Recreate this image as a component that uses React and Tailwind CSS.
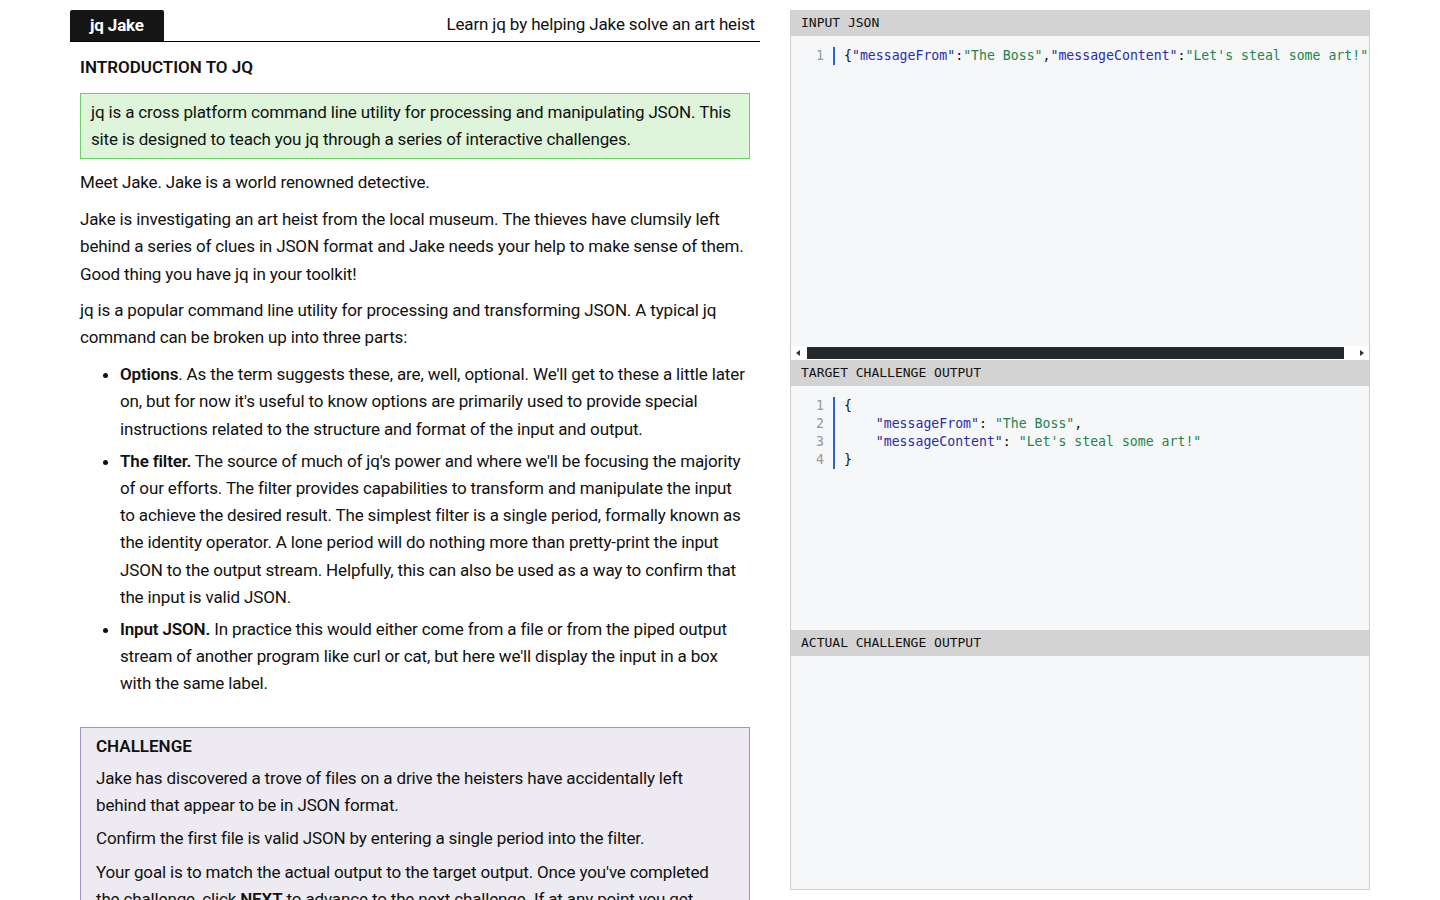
import React from "react";

const mono = { fontFamily: '"DejaVu Sans Mono", "Liberation Mono", monospace' };

function Line({ n, children }) {
  return (
    <div className="flex h-[18px] items-center">
      <div className="w-[42px] shrink-0 pr-[9px] text-right text-[#999999]">{n}</div>
      <div className="h-full w-[2px] shrink-0 bg-[#2563d6]" />
      <div className="shrink-0 whitespace-pre pl-[9px] text-[#111]">{children}</div>
    </div>
  );
}

const K = ({ children }) => <span className="text-[#2a2ca6]">{children}</span>;
const S = ({ children }) => <span className="text-[#23854a]">{children}</span>;

function PanelHeader({ children }) {
  return (
    <div className="flex h-[26px] shrink-0 items-center bg-[#d3d3d3] pl-[10px] text-[13px] text-[#111]" style={mono}>
      {children}
    </div>
  );
}

export default function App() {
  return (
    <div className="flex min-h-screen gap-[30px] bg-white pl-[70px] pt-[10px] tracking-[-0.15px] text-[#111]" style={{ fontFamily: 'Roboto, "Noto Sans", sans-serif' }}>
      <div className="w-[690px] shrink-0">
        <div className="flex items-end justify-between border-b border-black">
          <div className="flex h-[31px] items-center rounded-t-[2px] bg-[#151515] px-[20px] text-[17px] font-bold text-white">jq Jake</div>
          <div className="pb-[4px] pr-[5px] text-[17px]">Learn jq by helping Jake solve an art heist</div>
        </div>
        <div className="px-[10px] text-[17px] leading-[27.2px]">
          <h1 className="mt-[12px] text-[17px] font-semibold leading-[27px] tracking-normal">INTRODUCTION TO JQ</h1>
          <div className="mt-[12px] border border-[#6fd067] bg-[#def5db] px-[10px] py-[5px] leading-[27px]">
            jq is a cross platform command line utility for processing and manipulating JSON. This site is designed to teach you jq through a series of interactive challenges.
          </div>
          <p className="mt-[10px]">Meet Jake. Jake is a world renowned detective.</p>
          <p className="mt-[10px]">
            Jake is investigating an art heist from the local museum. The thieves have clumsily left behind a series of clues in JSON format and Jake needs your help to make sense of them. Good thing you have jq in your toolkit!
          </p>
          <p className="mt-[9px]">
            jq is a popular command line utility for processing and transforming JSON. A typical jq command can be broken up into three parts:
          </p>
          <ul className="mt-[10px] list-disc pl-[40px]">
            <li>
              <b className="font-semibold">Options</b>. As the term suggests these, are, well, optional. We'll get to these a little later on, but for now it's useful to know options are primarily used to provide special instructions related to the structure and format of the input and output.
            </li>
            <li className="mt-[5px]">
              <b className="font-semibold">The filter.</b> The source of much of jq's power and where we'll be focusing the majority of our efforts. The filter provides capabilities to transform and manipulate the input to achieve the desired result. The simplest filter is a single period, formally known as the identity operator. A lone period will do nothing more than pretty-print the input JSON to the output stream. Helpfully, this can also be used as a way to confirm that the input is valid JSON.
            </li>
            <li className="mt-[5px]">
              <b className="font-semibold">Input JSON.</b> In practice this would either come from a file or from the piped output stream of another program like curl or cat, but here we'll display the input in a box with the same label.
            </li>
          </ul>
          <div className="mt-[29px] border border-[#9d95c4] bg-[#edeaf1] px-[15px] pt-[5px] pb-[10px]">
            <h2 className="text-[17px] font-semibold leading-[27px] tracking-normal">CHALLENGE</h2>
            <p className="mt-[5px]">
              Jake has discovered a trove of files on a drive the heisters have accidentally left behind that appear to be in JSON format.
            </p>
            <p className="mt-[6px]">Confirm the first file is valid JSON by entering a single period into the filter.</p>
            <p className="mt-[7px]">
              Your goal is to match the actual output to the target output. Once you've completed the challenge, click <b className="font-semibold">NEXT</b> to advance to the next challenge. If at any point you get stuck, click <b className="font-semibold">HINT</b> for a nudge in the right direction.
            </p>
          </div>
        </div>
      </div>

      <div className="flex h-[880px] w-[580px] shrink-0 flex-col border-x border-b border-[#cfcfcf] bg-[#f6f7f9] tracking-normal">
        <PanelHeader>INPUT JSON</PanelHeader>
        <div className="h-[310px] shrink-0 overflow-hidden pt-[11px] text-[13.2px]" style={mono}>
          <Line n="1">
            {"{"}<K>"messageFrom"</K>:<S>"The Boss"</S>,<K>"messageContent"</K>:<S>"Let's steal some art!"</S>{"}"}
          </Line>
        </div>
        <div className="flex h-[14px] shrink-0 items-center bg-white">
          <svg width="16" height="14" viewBox="0 0 16 14" className="shrink-0">
            <path d="M9 4 L5 7 L9 10 Z" fill="#333" />
          </svg>
          <div className="h-[12px] w-[537px] bg-[#24292e]" />
          <div className="flex-1" />
          <svg width="16" height="14" viewBox="0 0 16 14" className="shrink-0">
            <path d="M7 4 L11 7 L7 10 Z" fill="#333" />
          </svg>
        </div>
        <PanelHeader>TARGET CHALLENGE OUTPUT</PanelHeader>
        <div className="h-[244px] shrink-0 pt-[11px] text-[13.2px]" style={mono}>
          <Line n="1">{"{"}</Line>
          <Line n="2">
            {"    "}<K>"messageFrom"</K>: <S>"The Boss"</S>,
          </Line>
          <Line n="3">
            {"    "}<K>"messageContent"</K>: <S>"Let's steal some art!"</S>
          </Line>
          <Line n="4">{"}"}</Line>
        </div>
        <PanelHeader>ACTUAL CHALLENGE OUTPUT</PanelHeader>
        <div className="flex-1" />
      </div>
    </div>
  );
}
